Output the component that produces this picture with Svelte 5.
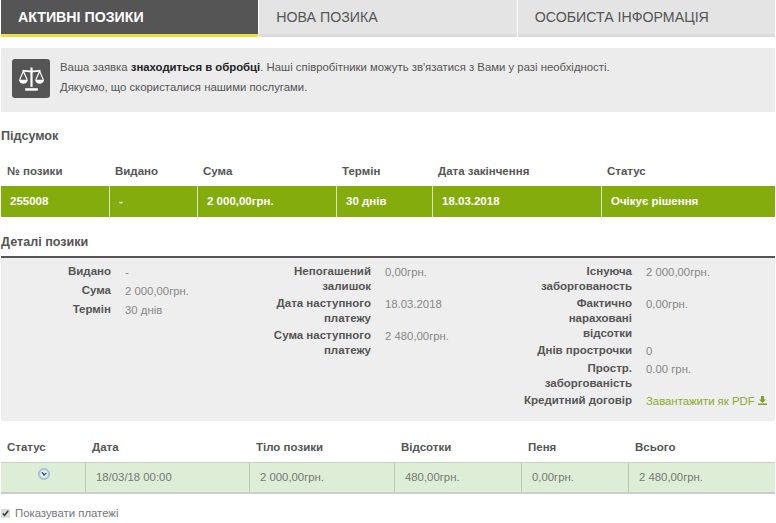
<script>
	const tabs = ['Активні позики', 'Нова позика', 'Особиста інформація'];

	const summaryCols = [
		{ label: '№ позики', value: '255008', width: 109 },
		{ label: 'Видано', value: '-', width: 88 },
		{ label: 'Сума', value: '2 000,00грн.', width: 139 },
		{ label: 'Термін', value: '30 днів', width: 96 },
		{ label: 'Дата закінчення', value: '18.03.2018', width: 169 },
		{ label: 'Статус', value: 'Очікує рішення', width: 173 }
	];

	const details = [
		[
			{ label: 'Видано', value: '-' },
			{ label: 'Сума', value: '2 000,00грн.' },
			{ label: 'Термін', value: '30 днів' }
		],
		[
			{ label: 'Непогашений залишок', value: '0,00грн.' },
			{ label: 'Дата наступного платежу', value: '18.03.2018' },
			{ label: 'Сума наступного платежу', value: '2 480,00грн.' }
		],
		[
			{ label: 'Існуюча заборгованость', value: '2 000,00грн.' },
			{ label: 'Фактично нараховані відсотки', value: '0,00грн.' },
			{ label: 'Днів прострочки', value: '0' },
			{ label: 'Простр. заборгованість', value: '0.00 грн.' }
		]
	];

	const paymentCols = [
		{ label: 'Статус', width: 85 },
		{ label: 'Дата', value: '18/03/18 00:00', width: 164 },
		{ label: 'Тіло позики', value: '2 000,00грн.', width: 145 },
		{ label: 'Відсотки', value: '480,00грн.', width: 127 },
		{ label: 'Пеня', value: '0,00грн.', width: 107 },
		{ label: 'Всього', value: '2 480,00грн.', width: 146 }
	];
</script>

<div class="page">
	<nav class="tabs">
		{#each tabs as tab, i}
			<div class="tab" class:active={i === 0}>{tab}</div>
		{/each}
	</nav>

	<section class="notice">
		<div class="notice-icon">
			<svg width="27" height="25" viewBox="0 0 30 24" fill="none" stroke="#fff" stroke-width="1.3" preserveAspectRatio="none">
				<path d="M15 1.5V20" stroke-width="2.4" />
				<path d="M8 22.5h14" stroke-width="2.4" />
				<path d="M5 4.500q10 1.500 20 0" stroke-width="1.8" />
				<path d="M6 5 1.8 13.2M6 5l4.2 8.2M24 5l-4.2 8.2M24 5l4.200 8.2" />
				<path d="M1 13.200h10c-.5 2.800-2.600 3.800-5 3.800s-4.500-1-5-3.800zM19 13.200h10c-.5 2.800-2.600 3.800-5 3.800s-4.500-1-5-3.800z" fill="#fff" stroke="none" />
			</svg>
		</div>
		<div class="notice-text">
			<p>Ваша заявка <b>знаходиться в обробці</b>. Наші співробітники можуть зв'язатися з Вами у разі необхідності.</p>
			<p>Дякуємо, що скористалися нашими послугами.</p>
		</div>
	</section>

	<h2 class="summary-title">Підсумок</h2>

	<div class="table-head summary-head">
		{#each summaryCols as col}
			<div class="head-cell" style="width: {col.width}px">{col.label}</div>
		{/each}
	</div>
	<div class="summary-row">
		{#each summaryCols as col}
			<div class="summary-cell" style="width: {col.width}px">{col.value}</div>
		{/each}
	</div>

	<h2 class="details-title">Деталі позики</h2>

	<section class="details">
		{#each details as group, g}
			<dl class="detail-group">
				{#each group as item}
					<dt>{item.label}</dt>
					<dd>{item.value}</dd>
				{/each}
				{#if g === 2}
					<dt>Кредитний договір</dt>
					<dd>
						<span class="pdf-link">Завантажити як PDF
							<svg width="9" height="9" viewBox="0 0 9 9" fill="#7f9f2a">
								<path d="M3 0h3v3.500h2L4.500 7 1 3.500h2zM0 7.500h9V9H0z" />
							</svg>
						</span>
					</dd>
				{/if}
			</dl>
		{/each}
	</section>

	<div class="table-head payment-head">
		{#each paymentCols as col}
			<div class="head-cell" style="width: {col.width}px">{col.label}</div>
		{/each}
	</div>
	<div class="payment-row">
		{#each paymentCols as col, i}
			<div class="payment-cell" class:status={i === 0} style="width: {col.width}px">
				{#if i === 0}
					<svg width="12" height="12" viewBox="0 0 12 12" fill="none">
						<circle cx="6" cy="6" r="5.500" fill="#aec8e8" stroke="#9db4d4" stroke-width=".8" />
						<circle cx="6" cy="6" r="3.800" fill="#eef3fa" />
						<path d="M3.900 4.200 6 7l2.300-2" stroke="#2f4f86" stroke-width="1.300" />
					</svg>
				{:else}
					{col.value}
				{/if}
			</div>
		{/each}
	</div>

	<label class="show-payments">
		<input type="checkbox" checked />
		Показувати платежі
	</label>
</div>

<style>
	:global(body) {
		background: #fff;
	}

	.page {
		width: 776px;
		height: 523px;
		overflow: hidden;
		font-family: 'Liberation Sans', Arial, sans-serif;
		font-size: 11.35px;
		color: #777;
	}

	.tabs {
		display: flex;
		gap: 1px;
		padding: 0 1px;
	}

	.tab {
		flex: 1;
		height: 34px;
		line-height: 35px;
		padding-left: 17px;
		font-size: 14.2px;
		text-transform: uppercase;
		color: #555;
		background: #e4e4e4;
		border-bottom: 3px solid #dcdcdc;
	}

	.tab.active {
		background: #555;
		color: #fff;
		font-weight: bold;
		border-bottom-color: #eddf3c;
	}

	.notice {
		display: flex;
		align-items: flex-start;
		gap: 10px;
		height: 64px;
		box-sizing: border-box;
		margin: 11px 1px 0;
		padding: 11px 0 0 11px;
		background: #ececec;
	}

	.notice-icon {
		display: flex;
		align-items: center;
		justify-content: center;
		width: 38px;
		height: 39px;
		border-radius: 3px;
		background: #555;
	}

	.notice-text {
		margin-top: -2px;
		color: #555;
	}

	.notice-text p {
		margin: 0;
		line-height: 20px;
	}

	.notice-text b {
		color: #222;
	}

	h2 {
		margin: 0;
		padding-left: 1px;
		font-size: 12.6px;
		line-height: 16px;
		font-weight: bold;
		color: #555;
	}

	.summary-title {
		margin-top: 16px;
	}

	.table-head {
		display: flex;
		padding: 0 1px;
	}

	.head-cell {
		padding-left: 5px;
		box-sizing: border-box;
		font-size: 11.5px;
		line-height: 16px;
		font-weight: bold;
		color: #555;
	}

	.head-cell:first-child {
		padding-left: 6px;
	}

	.summary-head {
		margin-top: 19px;
	}

	.summary-row {
		display: flex;
		margin: 7px 1px 0;
		height: 31px;
	}

	.summary-cell {
		box-sizing: border-box;
		padding-left: 9px;
		font-size: 11.5px;
		line-height: 31px;
		font-weight: bold;
		color: #fff;
		background: #84ac0c;
		border-right: 1px solid #dbe3bb;
	}

	.summary-cell:last-child {
		border-right: 0;
	}

	.details-title {
		margin-top: 17px;
	}

	.details {
		display: grid;
		grid-template-columns: 260px 261px 1fr;
		height: 163px;
		margin: 6px 1px 0;
		background: #eee;
		border-top: 2px solid #555;
		box-sizing: content-box;
	}

	.detail-group {
		display: grid;
		grid-template-columns: 110px 1fr;
		grid-auto-rows: min-content;
		column-gap: 14px;
		row-gap: 2px;
		margin: 0;
		padding-top: 6px;
	}

	.detail-group:first-child {
		row-gap: 3px;
	}

	dt {
		text-align: right;
		font-size: 11.5px;
		font-weight: bold;
		line-height: 15px;
		color: #555;
	}

	dd {
		margin: 0;
		line-height: 16px;
		color: #888;
	}

	.pdf-link {
		color: #87ad2c;
		white-space: nowrap;
	}

	.payment-head {
		margin-top: 18px;
	}

	.payment-head .head-cell {
		padding-left: 6px;
	}

	.payment-row {
		display: flex;
		height: 32px;
		margin: 7px 1px 0;
		box-sizing: border-box;
		background: #deeed6;
		border: solid #ccc;
		border-width: 1px 0 2px;
	}

	.payment-cell {
		box-sizing: border-box;
		padding-left: 10px;
		line-height: 29px;
		color: #777;
		border-right: 1px solid #bcc7b6;
	}

	.payment-cell:last-child {
		border-right: 0;
	}

	.payment-cell.status {
		padding: 5px 0 0 1px;
		text-align: center;
		line-height: 12px;
	}

	.show-payments {
		display: flex;
		align-items: center;
		gap: 5px;
		margin-top: 12px;
		line-height: 14px;
		color: #777;
	}

	.show-payments input {
		width: 9px;
		height: 9px;
		margin: 0 0 0 1px;
		accent-color: #ddd;
	}
</style>
